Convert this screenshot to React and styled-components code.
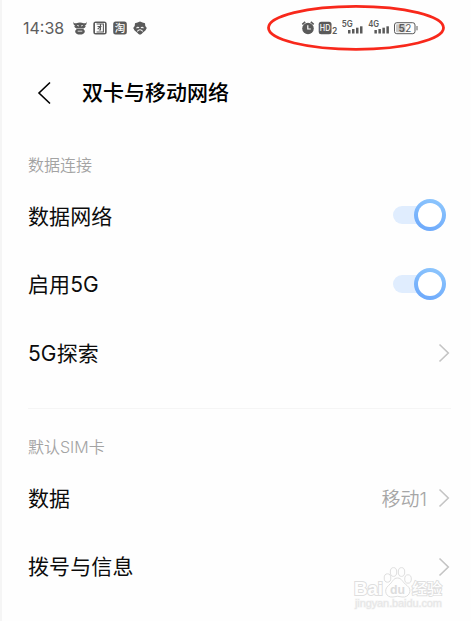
import React from 'react';
import styled, { createGlobalStyle } from 'styled-components';

const GlobalStyle = createGlobalStyle`
  * {
    box-sizing: border-box;
  }

  body {
    margin: 0;
    background: #fefefe;
    font-family: Roboto, 'Noto Sans CJK SC', sans-serif;
  }
`;

const s = {
  Screen: styled.div`
    position: relative;
    width: 471px;
    height: 621px;
    border-left: 2px solid #f5f5f5;
    overflow: hidden;
  `,
  StatusBar: styled.div`
    height: 55px;
    padding: 0 53px 0 21px;
    display: flex;
    align-items: center;
    justify-content: space-between;
  `,
  StatusLeft: styled.div`
    display: flex;
    align-items: center;
  `,
  Time: styled.div`
    width: 50px;
    font-family: Inter, sans-serif;
    font-size: 16px;
    font-weight: 400;
    color: #5d5d5d;
  `,
  AppIcons: styled.div`
    display: flex;
    gap: 6px;
  `,
  StatusRight: styled.div`
    display: flex;
    height: 20px;
  `,
  Ring: styled.svg`
    position: absolute;
    left: 264px;
    top: 4px;
  `,
  Header: styled.div`
    height: 76px;
    padding-left: 35px;
    display: flex;
    align-items: center;
  `,
  Title: styled.div`
    margin-left: 30px;
    font-size: 21px;
    font-weight: 500;
    line-height: 30px;
    color: #000;
  `,
  Label: styled.div`
    height: 34px;
    margin-top: ${({ $top }) => $top}px;
    padding-left: 26px;
    font-family: Inter, 'Noto Sans CJK SC', sans-serif;
    font-size: 16px;
    font-weight: 350;
    line-height: 34px;
    color: #a3a3a3;
  `,
  Row: styled.div`
    height: 68.5px;
    padding: 0 ${({ $switch }) => ($switch ? 25 : 21)}px 0 26px;
    display: flex;
    align-items: center;
    font-family: Inter, 'Noto Sans CJK SC', sans-serif;
    font-size: 21px;
    color: #0c0c0c;
  `,
  RowName: styled.div`
    flex: 1;
    padding-top: 1px;
    line-height: 30px;
    letter-spacing: 0.1px;
  `,
  RowValue: styled.div`
    margin-right: 11px;
    padding-top: 3px;
    font-size: 19px;
    font-weight: 350;
    line-height: 28px;
    color: #a6a6a6;
  `,
  Divider: styled.div`
    height: 1px;
    margin: 20.5px 20px 0 26px;
    background: #f5f5f5;
  `,
  Switch: styled.div`
    width: 53px;
    height: 32px;
    display: flex;
    align-items: center;
    margin-bottom: 2px;
  `,
  Track: styled.div`
    width: 32px;
    height: 18px;
    border-radius: 9px;
    background: #e0edfe;
  `,
  Knob: styled.div`
    width: 32px;
    height: 32px;
    margin-left: -11px;
    padding: 4px;
    border-radius: 50%;
    background: linear-gradient(20deg, #6aa6fb, #8fc8fd);

    &::after {
      content: '';
      display: block;
      height: 24px;
      border-radius: 50%;
      background: #fff;
    }
  `,
  Watermark: styled.svg`
    position: absolute;
    left: 350px;
    top: 562px;
  `,
};

const Arrow = () => (
  <svg width="12" height="20" viewBox="0 0 12 20" fill="none">
    <path d="M1.5 1.5L10.3 10L1.5 18.5" stroke="#c4c4c4" strokeWidth="1.6" />
  </svg>
);

const Toggle = () => (
  <s.Switch>
    <s.Track />
    <s.Knob />
  </s.Switch>
);

const AppIcons = () => (
  <s.AppIcons>
    <svg width="14" height="14" viewBox="0 0 14 14" fill="#5a5a5a">
      <path d="M.5 .5C.7 2.1 1.7 2.6 3.3 2.2Q7 1 10.7 2.2C12.3 2.6 13.3 2.1 13.5 .5C14 3 13 4.4 11.6 4.9L13 5.5L11.4 7H2.6L1 5.5L2.4 4.9C1 4.4 0 3 .5 .5Z" />
      <path d="M3 7.6H11L10.5 8.4C13 9.3 12 13.5 7 13.5S1 9.3 3.5 8.4Z" />
      <path d="M4.2 4.4L6 5M9.8 4.4L8 5M4.7 10.2H9.3" stroke="#fefefe" strokeWidth=".8" fill="none" />
    </svg>
    <svg width="14" height="14" viewBox="0 0 14 14">
      <rect x=".3" y=".5" width="13.4" height="13" rx="2.5" fill="#5a5a5a" />
      <rect x="2" y="2" width="10" height="10" fill="#fefefe" />
      <path d="M3.6 3H10.4V11H3.6M4.5 5.5H8.5M7.5 3.5V9H5.8M7.2 6L4.6 8.2" fill="none" stroke="#5a5a5a" strokeWidth="1.1" />
    </svg>
    <svg width="14" height="14" viewBox="0 0 14 14" overflow="visible">
      <rect x=".2" y=".5" width="13.6" height="13" rx="2.5" fill="#5a5a5a" />
      <text x="7" y="10.8" textAnchor="middle" fontFamily="Noto Sans CJK SC, sans-serif" fontSize="10.5" fontWeight="500" fill="#fefefe">
        淘
      </text>
    </svg>
    <svg width="14" height="14" viewBox="0 0 14 14">
      <path d="M4.5 1.5L7 .5L9.5 1.5L12 2.3L12.3 5L13.8 7L12.4 9.5L10 11.5L8.5 13L7 13.8L5.5 13L4 11.5L1.6 9.5L.2 7L1.7 5L2 2.3Z" fill="#5a5a5a" />
      <path d="M3.6 7.2Q4.8 5.5 6 7M8 7Q9.2 5.5 10.4 7.2M4.3 10.4Q7 7.2 9.7 10.4" stroke="#fefefe" strokeWidth="1.1" fill="none" />
    </svg>
  </s.AppIcons>
);

const Signal = ({ x, label }) => (
  <g transform={`translate(${x} 0)`}>
    <text x="0" y="9.3" fontSize="9" fontWeight="600" textLength="11" lengthAdjust="spacingAndGlyphs">
      {label}
    </text>
    <rect x="6.2" y="12" width="2.5" height="3.5" />
    <rect x="10.2" y="11" width="2.5" height="4.5" />
    <rect x="14.2" y="9.7" width="2.5" height="5.8" />
    <rect x="18.2" y="8.3" width="2.5" height="7.2" />
  </g>
);

const StatusIcons = () => (
  <svg width="118" height="20" viewBox="0 0 118 20" fill="#5a5a5a" fontFamily="Inter, sans-serif">
    <circle cx="8" cy="10.5" r="5.8" />
    <path d="M2.3 6.3L5.2 3.8M13.7 6.3L10.8 3.8" stroke="#5a5a5a" strokeWidth="1.6" />
    <path d="M7.8 7.2V11H10.8" stroke="#fefefe" strokeWidth="1.2" fill="none" />
    <rect x="18.7" y="3.7" width="12.8" height="12.6" rx="2.5" />
    <text x="25.1" y="13" textAnchor="middle" fontSize="8.5" fontWeight="500" textLength="10.5" lengthAdjust="spacingAndGlyphs" fill="#fefefe">
      HD
    </text>
    <text x="32" y="16.2" fontSize="8.5" fontWeight="600">
      2
    </text>
    <Signal x={41.8} label="5G" />
    <Signal x={68.2} label="4G" />
    <rect x="94.5" y="4.7" width="20.5" height="11" rx="2.3" fill="none" stroke="#5a5a5a" />
    <rect x="96" y="6.2" width="9.5" height="8" rx="1" fill="#c8c8c8" />
    <path d="M117 8V12.3" stroke="#5a5a5a" />
    <text x="98.6" y="13.9" fontSize="10" fontWeight="700">
      5
    </text>
    <text x="105.2" y="13.9" fontSize="10">
      2
    </text>
  </svg>
);

const Watermark = () => (
  <s.Watermark width="96" height="50" viewBox="0 0 96 50" fill="#fefefe" stroke="#dfdfdf" fontFamily="Liberation Sans, Noto Sans CJK SC, sans-serif">
    <ellipse cx="35.5" cy="16" rx="3.3" ry="4.2" />
    <ellipse cx="41.5" cy="10" rx="3.2" ry="4.4" />
    <ellipse cx="49.5" cy="10" rx="3.2" ry="4.4" />
    <ellipse cx="56" cy="17" rx="3.3" ry="4.2" />
    <path d="M45.5 16C50 16 50 20 55 23.5C61 28 57 36 50 35Q45.5 33.5 41 35C34 36 31 28 36.5 23.5C41 20 41 16 45.5 16Z" />
    <text x="2" y="33" fontSize="19" fontWeight="700" strokeWidth="2" textLength="29" lengthAdjust="spacingAndGlyphs" paintOrder="stroke">
      Bai
    </text>
    <text x="38" y="32" fontSize="13" fontWeight="700" textLength="15" lengthAdjust="spacingAndGlyphs" fill="#dcdcdc" stroke="none">
      du
    </text>
    <text x="60" y="32" fontSize="15" fontWeight="500" strokeWidth="1.8" paintOrder="stroke">
      经验
    </text>
    <text x="3" y="45" fontSize="11" textLength="87" fill="#e6e6e6" stroke="#f4f4f4" strokeWidth="1.2" paintOrder="stroke">
      jingyan.baidu.com
    </text>
  </s.Watermark>
);

const App = () => {
  return (
    <>
      <GlobalStyle />
      <s.Screen>
        <s.StatusBar>
          <s.StatusLeft>
            <s.Time>14:38</s.Time>
            <AppIcons />
          </s.StatusLeft>
          <s.StatusRight>
            <StatusIcons />
          </s.StatusRight>
        </s.StatusBar>
        <s.Header>
          <svg width="15" height="24" viewBox="0 0 15 24" fill="none">
            <path d="M13 1.5L2 12L13 22.5" stroke="#000" strokeWidth="1.6" />
          </svg>
          <s.Title>双卡与移动网络</s.Title>
        </s.Header>
        <s.Label $top={17}>数据连接</s.Label>
        <s.Row $switch>
          <s.RowName>数据网络</s.RowName>
          <Toggle />
        </s.Row>
        <s.Row $switch>
          <s.RowName>启用5G</s.RowName>
          <Toggle />
        </s.Row>
        <s.Row>
          <s.RowName>5G探索</s.RowName>
          <Arrow />
        </s.Row>
        <s.Divider />
        <s.Label $top={21}>默认SIM卡</s.Label>
        <s.Row>
          <s.RowName>数据</s.RowName>
          <s.RowValue>移动1</s.RowValue>
          <Arrow />
        </s.Row>
        <s.Row>
          <s.RowName>拨号与信息</s.RowName>
          <Arrow />
        </s.Row>
        <Watermark />
        <s.Ring width="182" height="50" viewBox="0 0 182 50" fill="none">
          <ellipse cx="90" cy="23.8" rx="87.5" ry="21.5" stroke="#f8281b" strokeWidth="2.8" />
        </s.Ring>
      </s.Screen>
    </>
  );
};

export default App;
